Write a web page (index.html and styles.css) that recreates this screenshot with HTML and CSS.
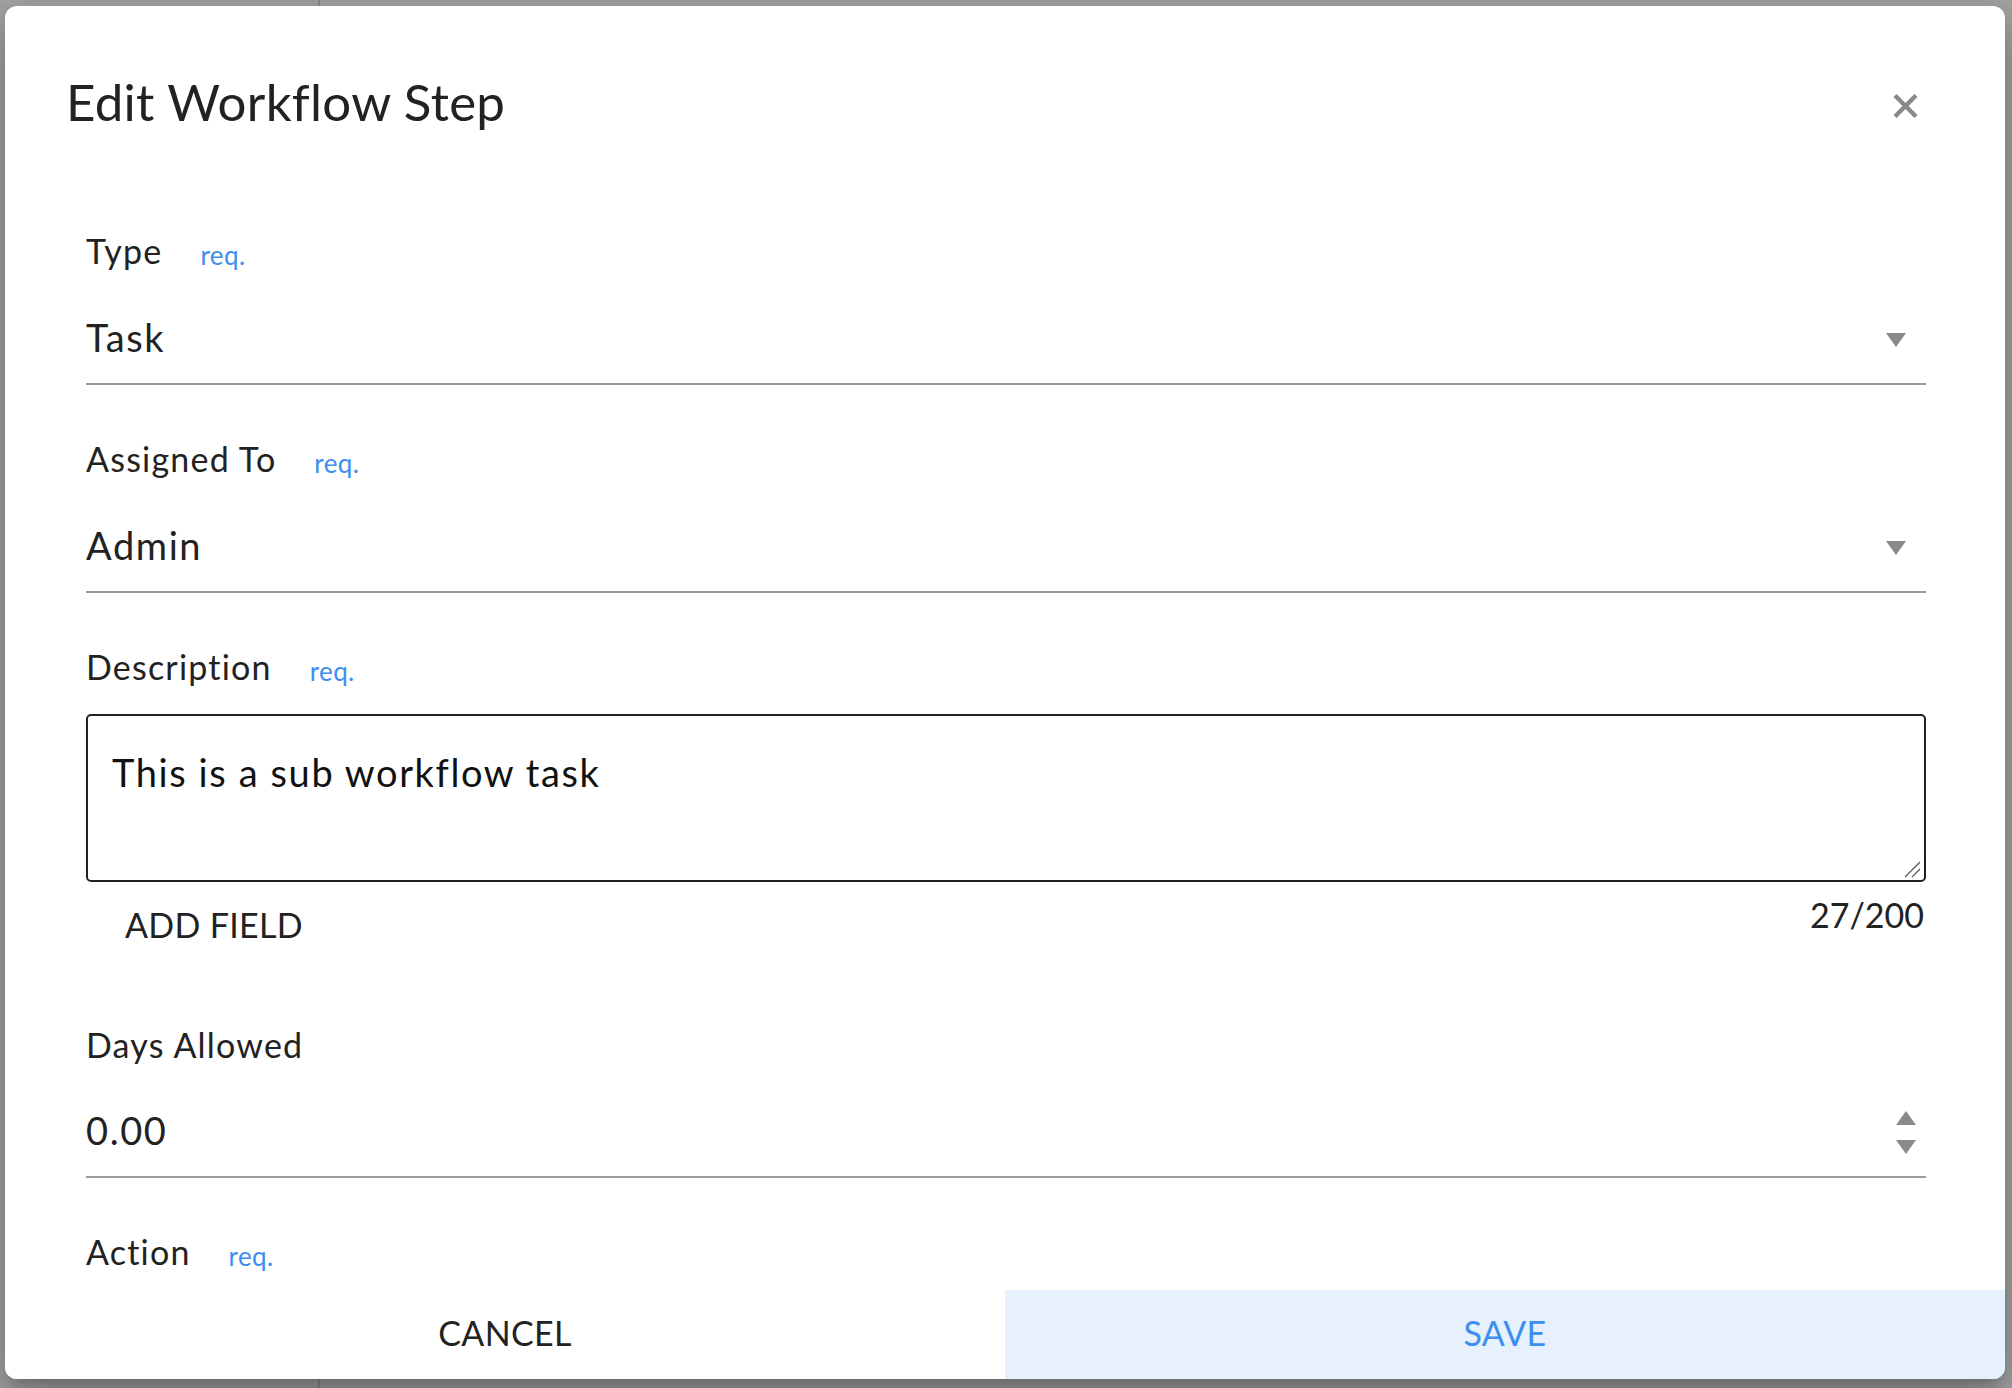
FILE: index.html
```html
<!DOCTYPE html>
<html lang="en">
<head>
<meta charset="utf-8">
<title>Edit Workflow Step</title>
<link rel="stylesheet" href="styles.css">
</head>
<body>
<div class="backdrop">
  <div class="modal">
    <div class="modal-header">
      <h1 class="title">Edit Workflow Step</h1>
      <button class="close" aria-label="Close">
        <svg width="25" height="24" viewBox="0 0 25 24"><path d="M2 1.5 L23 22.5 M23 1.5 L2 22.5" stroke="#8a8a8a" stroke-width="4.4" fill="none"/></svg>
      </button>
    </div>
    <div class="modal-body">
      <div class="field">
        <div class="label-row"><span class="label">Type</span><span class="req">req.</span></div>
        <div class="input-row">
          <span class="value">Task</span>
          <svg class="caret" width="20" height="14" viewBox="0 0 20 14"><polygon points="0,0 20,0 10,14" fill="#8a8a8a"/></svg>
        </div>
      </div>
      <div class="field">
        <div class="label-row"><span class="label">Assigned To</span><span class="req">req.</span></div>
        <div class="input-row">
          <span class="value">Admin</span>
          <svg class="caret" width="20" height="14" viewBox="0 0 20 14"><polygon points="0,0 20,0 10,14" fill="#8a8a8a"/></svg>
        </div>
      </div>
      <div class="field field-text">
        <div class="label-row"><span class="label">Description</span><span class="req">req.</span></div>
        <div class="textarea">
          <span class="textarea-text">This is a sub workflow task</span>
          <svg class="grip" width="18" height="18" viewBox="0 0 18 18"><path d="M1 16 L16 1 M8 16 L16 8" stroke="#555" stroke-width="1.2" fill="none"/></svg>
        </div>
        <div class="aux-row">
          <button class="add-field">ADD FIELD</button>
          <span class="counter">27/200</span>
        </div>
      </div>
      <div class="field field-days">
        <div class="label-row"><span class="label">Days Allowed</span></div>
        <div class="input-row">
          <span class="value">0.00</span>
          <div class="spinner">
            <svg width="20" height="14" viewBox="0 0 20 14"><polygon points="0,14 20,14 10,0" fill="#8a8a8a"/></svg>
            <svg width="20" height="14" viewBox="0 0 20 14"><polygon points="0,0 20,0 10,14" fill="#8a8a8a"/></svg>
          </div>
        </div>
      </div>
      <div class="field">
        <div class="label-row"><span class="label">Action</span><span class="req">req.</span></div>
        <div class="input-row">
          <span class="value">&nbsp;</span>
        </div>
      </div>
    </div>
    <div class="modal-footer">
      <button class="btn btn-cancel">CANCEL</button>
      <button class="btn btn-save">SAVE</button>
    </div>
  </div>
</div>
</body>
</html>
```
FILE: styles.css
```css
* { box-sizing: border-box; }

html, body {
  margin: 0;
  padding: 0;
}

body {
  width: 2012px;
  height: 1388px;
  overflow: hidden;
  font-family: "Lato", "Open Sans", sans-serif;
  color: #212121;
  background:
    linear-gradient(to right, transparent 318px, #8c8c8c 318px, #8c8c8c 320px, transparent 320px),
    #a3a3a3;
}

.backdrop {
  width: 2012px;
  height: 1388px;
  padding: 6px 0 0 5px;
}

.modal {
  width: 2000px;
  height: 1373px;
  background: #fff;
  border-radius: 12px;
  overflow: hidden;
  display: flex;
  flex-direction: column;
  box-shadow: 0 11px 15px -7px rgba(0,0,0,.2), 0 24px 38px 3px rgba(0,0,0,.14), 0 9px 46px 8px rgba(0,0,0,.12);
}

.modal-header {
  display: flex;
  justify-content: space-between;
  align-items: flex-start;
  padding: 64px 87px 0 61px;
  height: 130px;
  flex: none;
}

.title {
  margin: 0;
  font-size: 51px;
  line-height: 64px;
  font-weight: 400;
  color: #222;
  letter-spacing: 0.3px;
}

.close {
  margin-top: 24px;
  padding: 0;
  border: 0;
  background: none;
  width: 25px;
  height: 24px;
  display: block;
}
.close svg { display: block; }

.modal-body {
  flex: 1;
  overflow: hidden;
  padding: 95px 79px 0 81px;
}

.field {
  margin-bottom: 54px;
}

.label-row {
  display: flex;
  align-items: baseline;
  height: 40px;
}

.label {
  font-size: 34px;
  line-height: 40px;
  color: #222;
  letter-spacing: 1.2px;
}

.req {
  margin-left: 38px;
  font-size: 26px;
  line-height: 40px;
  color: #3d8ef0;
  position: relative;
  top: 1px;
  letter-spacing: 0.4px;
}

.input-row {
  margin-top: 43px;
  display: flex;
  justify-content: space-between;
  align-items: flex-start;
  padding-bottom: 23px;
  border-bottom: 2px solid #9b9b9b;
}

.value {
  font-size: 38px;
  line-height: 46px;
  color: #222;
  letter-spacing: 1.6px;
}

.caret {
  display: block;
  margin-top: 19px;
  margin-right: 20px;
}

.spinner {
  display: flex;
  flex-direction: column;
  gap: 15px;
  margin-top: 4px;
  margin-right: 10px;
}
.spinner svg { display: block; }

.field-text { margin-bottom: 0; }

.textarea {
  position: relative;
  margin-top: 27px;
  height: 168px;
  border: 2px solid #222;
  border-radius: 5px;
  padding: 34px 24px 0 24px;
}

.textarea-text {
  display: block;
  font-size: 38px;
  line-height: 44px;
  color: #111;
  letter-spacing: 1.6px;
}

.grip {
  position: absolute;
  right: 2px;
  bottom: 1px;
}

.aux-row {
  display: flex;
  justify-content: space-between;
  align-items: flex-start;
  height: 62px;
}

.add-field {
  margin: 23px 0 0 39px;
  padding: 0;
  border: 0;
  background: none;
  font-family: inherit;
  font-size: 34px;
  line-height: 40px;
  color: #222;
  letter-spacing: 0.3px;
}

.counter {
  margin-top: 13px;
  margin-right: 2px;
  font-size: 34px;
  line-height: 40px;
  color: #222;
}

.field-text + .field { margin-top: 81px; }

.field-days .input-row {
  margin-top: 42px;
  padding-bottom: 22px;
}

.modal-footer {
  flex: none;
  height: 89px;
  display: flex;
}

.btn {
  flex: 1;
  height: 89px;
  border: 0;
  margin: 0;
  padding: 23px 0 0 0;
  font-family: inherit;
  font-size: 34px;
  line-height: 40px;
  display: flex;
  justify-content: center;
  align-items: flex-start;
  letter-spacing: 0.3px;
}

.btn-cancel {
  background: #fff;
  color: #222;
}

.btn-save {
  background: #e7f1fd;
  color: #3d8ef0;
}
```
